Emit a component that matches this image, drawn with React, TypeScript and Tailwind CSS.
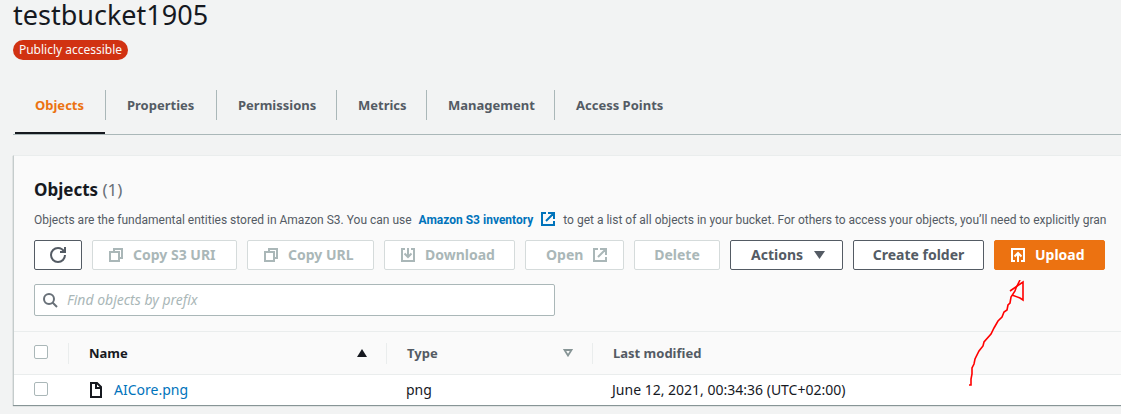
import type { ReactNode } from 'react';

type IconProps = { className?: string };

const stroke = { fill: 'none', stroke: 'currentColor', strokeWidth: 2 } as const;

function RefreshIcon() {
  return (
    <svg className="size-4" viewBox="0 0 16 16" aria-hidden="true" {...stroke}>
      <path d="M10 5h5V0" />
      <path d="M15 8a7 7 0 0 1-7 7 7 7 0 0 1-7-7 7 7 0 0 1 7-7c2.800 0 5 1.500 6.300 4" />
    </svg>
  );
}

function CopyIcon() {
  return (
    <svg className="size-4" viewBox="0 0 16 16" aria-hidden="true" {...stroke}>
      <path d="M2 5h9v9H2z" />
      <path d="M6 5V2h8v9h-3" />
    </svg>
  );
}

function DownloadIcon() {
  return (
    <svg className="size-4" viewBox="0 0 16 16" aria-hidden="true" {...stroke}>
      <path d="M5 2H2v12h12V2h-3" />
      <path d="M8 1v9M4.500 6.500l3.500 3.500 3.500-3.500" />
    </svg>
  );
}

function UploadIcon() {
  return (
    <svg className="size-4" viewBox="0 0 16 16" aria-hidden="true" {...stroke}>
      <path d="M5 14H2V2h12v12h-3" />
      <path d="M8 15V6M4.500 9.500L8 6l3.500 3.500" />
    </svg>
  );
}

function ExternalIcon({ className = 'size-4' }: IconProps) {
  return (
    <svg className={className} viewBox="0 0 16 16" aria-hidden="true" {...stroke}>
      <path d="M14 10v4H2V2h4M8 2h6v6M6 10l8-8" />
    </svg>
  );
}

function SearchIcon() {
  return (
    <svg className="size-4 shrink-0 text-[#687078]" viewBox="0 0 16 16" aria-hidden="true" {...stroke}>
      <circle cx="7" cy="7" r="5" />
      <path d="M15 15l-4.500-4.500" />
    </svg>
  );
}

function FileIcon() {
  return (
    <svg className="size-4 shrink-0 text-[#16191f]" viewBox="0 0 16 16" aria-hidden="true" {...stroke}>
      <path d="M3 1h6l4 4v10H3z" />
      <path d="M8 1v5h5" />
    </svg>
  );
}

const tabs = [
  { label: 'Objects', width: 'w-[90px]' },
  { label: 'Properties', width: 'w-[111px]' },
  { label: 'Permissions', width: 'w-[120px]' },
  { label: 'Metrics', width: 'w-[90px]' },
  { label: 'Management', width: 'w-[128px]' },
  { label: 'Access Points', width: 'w-[129px]' },
];

type ActionProps = { width: string; disabled?: boolean; primary?: boolean; label?: string; children: ReactNode };

function ActionButton({ width, disabled, primary, label, children }: ActionProps) {
  const tone = primary
    ? 'border-[#ec7211] bg-[#ec7211] text-white'
    : disabled
      ? 'border-[#d5dbdb] bg-white text-[#aab7b8]'
      : 'border-[#545b64] bg-white text-[#545b64]';
  return (
    <button
      type="button"
      disabled={disabled}
      aria-label={label}
      className={`flex h-[30px] shrink-0 items-center rounded-[2px] border text-sm font-bold whitespace-nowrap ${width} ${tone}`}
    >
      {children}
    </button>
  );
}

function Checkbox({ label }: { label: string }) {
  return (
    <input
      type="checkbox"
      aria-label={label}
      className="mb-[2px] block size-[14px] appearance-none rounded-[2px] border border-[#aab7b8] bg-white checked:bg-[#0073bb]"
    />
  );
}

export default function App() {
  return (
    <main className="min-h-screen overflow-hidden bg-[#f2f3f3] pb-2 pl-[13px] font-['Noto_Sans','Open_Sans',sans-serif] text-sm text-[#16191f]">
      <h1 className="text-[27px] leading-[30px]">testbucket1905</h1>
      <span className="mt-[10px] flex h-5 w-[115px] items-center justify-center rounded-full bg-[#d13212] text-xs whitespace-nowrap text-[#fafafa]">
        Publicly accessible
      </span>

      <nav className="mt-4 border-b border-[#aab7b8] pl-[2px]">
        <ul className="flex">
          {tabs.map((tab, i) => (
            <li key={tab.label} className={`${tab.width} shrink-0 ${i === 0 ? 'border-b-2 border-[#16191f]' : ''}`}>
              <a
                href={`#${tab.label}`}
                aria-current={i === 0 ? 'page' : undefined}
                className={`mt-[14px] mb-3 flex h-[30px] items-center text-[13px] font-bold whitespace-nowrap ${i === 0 ? 'pl-5 text-[#ec7211]' : 'border-l border-[#aab7b8] pl-[21px] text-[#545b64]'}`}
              >
                {tab.label}
              </a>
            </li>
          ))}
        </ul>
      </nav>

      <section className="mt-5 border-t border-l border-[#eaeded] border-l-[#c5cccc] bg-[#fafafa] shadow-[0_1px_1px_#879596]">
        <div className="px-5 pt-5 pb-[15px]">
          <h2 className="text-[17px] leading-7 font-bold">
            Objects <span className="font-normal text-[#687078]">(1)</span>
          </h2>
          <p className="mt-1 font-['Roboto','Noto_Sans',sans-serif] text-xs leading-6 whitespace-nowrap text-[#545b64]">
            Objects are the fundamental entities stored in Amazon S3. You can use{' '}
            <a href="#inventory" className="mx-1 font-bold text-[#0073bb]">
              Amazon S3 inventory <ExternalIcon className="ml-1 inline size-4 align-text-bottom" />
            </a>{' '}
            to get a list of all objects in your bucket. For others to access your objects, you’ll need to explicitly
            gran
          </p>
          <div className="mt-2 flex gap-[10px]">
            <ActionButton width="w-12 justify-center" label="Refresh">
              <RefreshIcon />
            </ActionButton>
            <ActionButton width="w-[145px] gap-[9px] pl-[15px]" disabled>
              <CopyIcon />
              Copy S3 URI
            </ActionButton>
            <ActionButton width="w-[127px] gap-[9px] pl-[15px]" disabled>
              <CopyIcon />
              Copy URL
            </ActionButton>
            <ActionButton width="w-[131px] gap-[9px] pl-[15px]" disabled>
              <DownloadIcon />
              Download
            </ActionButton>
            <ActionButton width="w-[99px] gap-[9px] pl-5" disabled>
              Open
              <ExternalIcon />
            </ActionButton>
            <ActionButton width="w-[86px] justify-center" disabled>
              Delete
            </ActionButton>
            <ActionButton width="w-[113px] gap-[9px] pl-5">
              Actions
              <svg className="size-4" viewBox="0 0 16 16" aria-hidden="true">
                <path d="M2 4h11l-5.500 8z" fill="currentColor" />
              </svg>
            </ActionButton>
            <ActionButton width="w-[131px] justify-center">Create folder</ActionButton>
            <div className="relative">
              <ActionButton width="w-[111px] gap-[9px] pl-[15px]" primary>
                <UploadIcon />
                Upload
              </ActionButton>
              <svg
                className="pointer-events-none absolute top-10 right-20 h-[106px] w-[57px]"
                viewBox="968 280 57 106"
                fill="none"
                stroke="#f00"
                strokeWidth="1.6"
                aria-hidden="true"
              >
                <path d="M969 385h2l0-6 1-5 0-6 2-4 1-5 4-8 4-5 1-4 7-8 3-6 4-7 4-4 2-5 3-2 1-5 2-2 1-6 4-6 1-3 4-8" />
                <path d="M1010 291l13-9v18l-3-2-8-3" />
              </svg>
            </div>
          </div>
          <label className="mt-[14px] flex h-8 w-[521px] items-center gap-[9px] rounded-[2px] border border-[#aab7b8] bg-white px-[7px]">
            <SearchIcon />
            <input
              type="search"
              aria-label="Find objects by prefix"
              placeholder="Find objects by prefix"
              className="min-w-0 flex-1 bg-transparent outline-none placeholder:text-[#aab7b8] placeholder:italic"
            />
          </label>
        </div>

        <table className="w-full table-fixed border-collapse text-left">
          <colgroup>
            <col className="w-[54px]" />
            <col className="w-[318px]" />
            <col className="w-[206px]" />
            <col />
          </colgroup>
          <thead>
            <tr className="h-[43px] border-y border-[#eaeded] text-[13px] text-[#545b64]">
              <th className="pl-5">
                <Checkbox label="Select all objects" />
              </th>
              <th className="p-0" aria-sort="ascending">
                <div className="flex h-[21px] items-center justify-between border-l border-[#eaeded] pr-[19px] pl-5 text-[#16191f]">
                  Name
                  <svg className="h-2 w-[10px]" viewBox="0 0 10 8" aria-hidden="true">
                    <path d="M0 8h10L5 0z" fill="currentColor" />
                  </svg>
                </div>
              </th>
              <th className="p-0">
                <div className="flex h-[21px] items-center justify-between border-l border-[#eaeded] pr-[19px] pl-5">
                  Type
                  <svg className="h-2 w-[10px] text-[#879596]" viewBox="0 0 10 8" aria-hidden="true">
                    <path d="M1.500 1h7L5 6.500z" fill="none" stroke="currentColor" strokeWidth="1.800" />
                  </svg>
                </div>
              </th>
              <th className="p-0">
                <div className="flex h-[21px] items-center border-l border-[#eaeded] pl-5">Last modified</div>
              </th>
            </tr>
          </thead>
          <tbody>
            <tr className="h-[30px] bg-white">
              <td className="pl-5">
                <Checkbox label="Select AICore.png" />
              </td>
              <td className="p-0 pl-5">
                <span className="flex items-center gap-[10px]">
                  <FileIcon />
                  <a href="#AICore.png" className="text-[#0073bb]">
                    AICore.png
                  </a>
                </span>
              </td>
              <td className="p-0 pl-5">png</td>
              <td className="p-0 pl-5">June 12, 2021, 00:34:36 (UTC+02:00)</td>
            </tr>
          </tbody>
        </table>
      </section>
    </main>
  );
}
